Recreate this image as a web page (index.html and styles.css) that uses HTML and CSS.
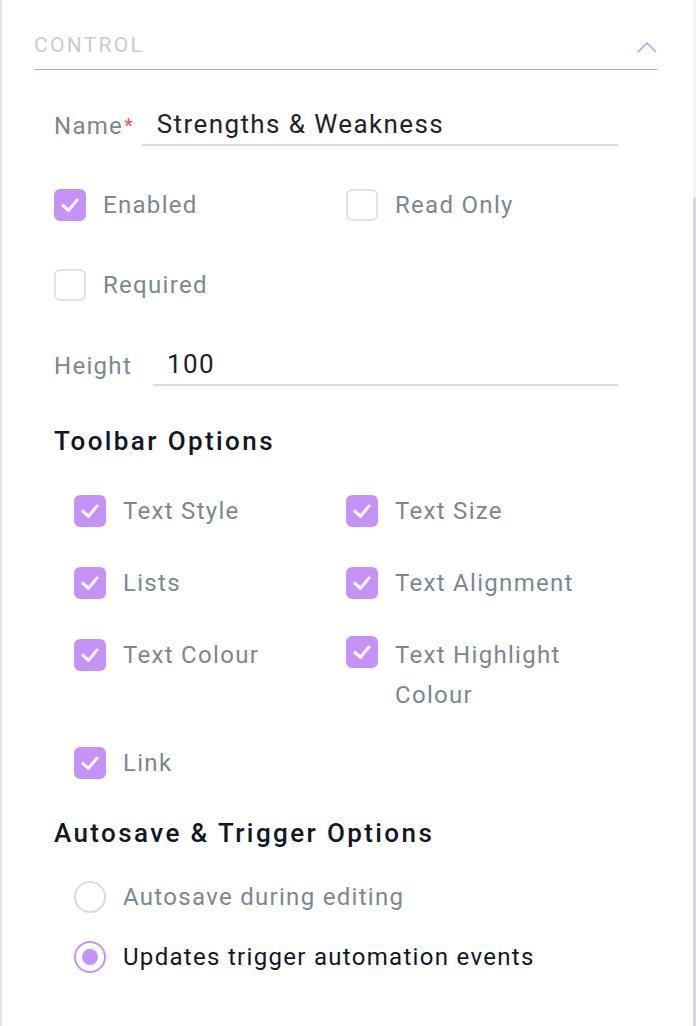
FILE: index.html
```html
<!DOCTYPE html>
<html>
<head>
    <title>Control settings</title>
    <link rel="stylesheet" href="styles.css">
</head>
<body>
    <div class="panel">
        <div class="content">
            <div class="section-head">
                <span class="section-title">CONTROL</span>
                <svg class="chevron" width="20" height="12" viewBox="0 0 20 12">
                    <polyline points="1,11 10,2 19,11" fill="none" stroke="#c39cf2" stroke-width="1.6"/>
                </svg>
            </div>

            <div class="section-body">
                <div class="field field-name">
                    <label>Name<span class="req">*</span></label>
                    <div class="input">Strengths &amp; Weakness</div>
                </div>

                <div class="checks">
                    <div class="check"><span class="box on"></span><span class="text">Enabled</span></div>
                    <div class="check"><span class="box"></span><span class="text">Read Only</span></div>
                    <div class="check"><span class="box"></span><span class="text">Required</span></div>
                </div>

                <div class="field field-height">
                    <label>Height</label>
                    <div class="input">100</div>
                </div>

                <h3>Toolbar Options</h3>

                <div class="checks options">
                    <div class="check"><span class="box on"></span><span class="text">Text Style</span></div>
                    <div class="check"><span class="box on"></span><span class="text">Text Size</span></div>
                    <div class="check"><span class="box on"></span><span class="text">Lists</span></div>
                    <div class="check"><span class="box on"></span><span class="text">Text Alignment</span></div>
                    <div class="check"><span class="box on"></span><span class="text">Text Colour</span></div>
                    <div class="check two-line"><span class="box on"></span><span class="text">Text Highlight<br>Colour</span></div>
                    <div class="check"><span class="box on"></span><span class="text">Link</span></div>
                </div>

                <h3 class="autosave-head">Autosave &amp; Trigger Options</h3>

                <div class="radios">
                    <div class="radio"><span class="dot"></span><span class="text">Autosave during editing</span></div>
                    <div class="radio selected"><span class="dot"></span><span class="text">Updates trigger automation events</span></div>
                </div>
            </div>
        </div>
        <div class="scrollbar"><div class="thumb"></div></div>
    </div>
</body>
</html>
```

FILE: styles.css
```css
html, body { margin: 0; padding: 0; background: #fff; }
body { font-family: Roboto, "Noto Sans", sans-serif; color: #7a8794; letter-spacing: 1.3px; }

.panel { display: flex; height: 1026px; border-left: 2px solid #dde2e7; box-sizing: border-box; }
.content { flex: 1; }
.scrollbar { width: 3px; background: #f4f3f9; display: flex; flex-direction: column; padding-top: 198px; }
.thumb { flex: 1; background: #d3d9df; }

.section-head { display: flex; justify-content: space-between; align-items: center; margin: 0 36px 0 32px; height: 70px; padding-top: 20px; box-sizing: border-box; border-bottom: 1px solid #c39cf2; }
.section-title { font-size: 21px; color: #c7ccd5; letter-spacing: 2.3px; }
.chevron { margin-top: 4px; }

.section-body { padding: 38px 75px 0 52px; }

.field { display: flex; align-items: flex-end; font-size: 24px; }
.field label { line-height: 32px; padding-bottom: 4px; }
.field .input { flex: 1; color: #1e2328; font-size: 26px; letter-spacing: 1.4px; line-height: 32px; padding: 0 0 4px 15px; border-bottom: 2px solid #dadee3; }
.field-name label { margin-right: 9px; }
.req { color: #f0525a; font-size: 20px; vertical-align: top; margin-left: 1px; letter-spacing: 0; }
.field-height { margin-top: 43px; }
.field-height label { margin-right: 21px; }
.field-height .input { padding-left: 14px; }

.checks { display: grid; grid-template-columns: 292px 1fr; row-gap: 40px; margin-top: 39px; }
.check { display: flex; align-items: flex-start; font-size: 24px; line-height: 40px; }
.box { width: 32px; height: 32px; box-sizing: border-box; border: 2px solid #dfe3e7; border-radius: 6px; margin-top: 4px; margin-right: 17px; flex-shrink: 0; position: relative; }
.box.on { background: #c592f8; border-color: #c592f8; }
.box.on::after { content: ""; position: absolute; left: 9px; top: 4px; width: 7px; height: 13px; border: solid #fff; border-width: 0 3px 3px 0; transform: rotate(40deg); }
.check.two-line { margin-bottom: -4px; }
.check.two-line .box { margin-top: 1px; }

h3 { margin: 0; font-size: 26px; font-weight: 500; color: #0f1727; letter-spacing: 2.4px; line-height: 36px; }
.section-body > h3 { margin-top: 37px; }

.checks.options { grid-template-columns: 272px 1fr; row-gap: 32px; margin-left: 20px; margin-top: 32px; }

.section-body > .autosave-head { margin-top: 32px; }

.radios { margin-left: 20px; margin-top: 26px; display: flex; flex-direction: column; gap: 20px; }
.radio { display: flex; align-items: center; font-size: 24px; line-height: 40px; }
.dot { width: 32px; height: 32px; box-sizing: border-box; border: 2px solid #d7dbe0; border-radius: 50%; margin-right: 17px; display: flex; align-items: center; justify-content: center; }
.radio.selected .dot { border-color: #c592f8; }
.radio.selected .dot::after { content: ""; width: 16px; height: 16px; border-radius: 50%; background: #c592f8; }
.radio.selected .text { color: #0f1727; }
```
